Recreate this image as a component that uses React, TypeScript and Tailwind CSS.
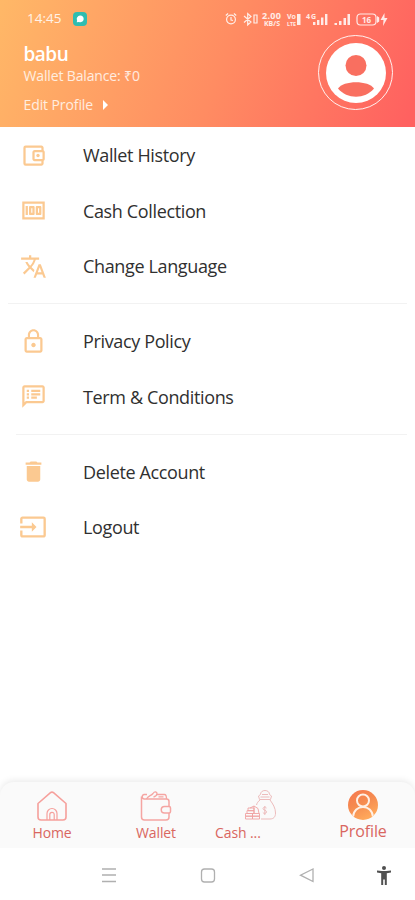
import type { ReactNode } from 'react';
import {
  MdOutlineAccountBalanceWallet,
  MdOutlineMoney,
  MdTranslate,
  MdLockOutline,
  MdOutlineSpeakerNotes,
  MdDelete,
  MdInput,
  MdArrowRight,
} from 'react-icons/md';

const groups = [
  [
    { label: 'Wallet History', icon: <MdOutlineAccountBalanceWallet size={27} /> },
    { label: 'Cash Collection', icon: <MdOutlineMoney size={27} /> },
    { label: 'Change Language', icon: <MdTranslate size={27} /> },
  ],
  [
    { label: 'Privacy Policy', icon: <MdLockOutline size={27} /> },
    { label: 'Term & Conditions', icon: <MdOutlineSpeakerNotes size={27} /> },
  ],
  [
    { label: 'Delete Account', icon: <MdDelete size={27} /> },
    { label: 'Logout', icon: <MdInput size={28} /> },
  ],
];

function StatusBar() {
  return (
    <div className="flex h-[38px] items-center pl-[27px] pr-[25px] text-white/85">
      <span className="w-[37px] text-[13.5px] leading-none">14:45</span>
      <span className="ml-[9px] flex size-[14px] items-center justify-center rounded-[4px] bg-[#2fbdb0]">
        <svg width="10" height="10" viewBox="0 0 10 10" fill="white">
          <path d="M5 1.600a3.300 3.300 0 1 1-1 6.300L1.800 8.300l.3-2A3.300 3.300 0 0 1 5 1.600z" />
        </svg>
      </span>
      <svg className="ml-auto" width="166" height="18" viewBox="0 0 166 18" fill="none" stroke="currentColor" strokeWidth="1.2">
        {/* alarm */}
        <circle cx="7" cy="9.5" r="4.4" />
        <path d="M7 7v3l2 .5M1.800 5.500l2.300-2M12.200 5.500l-2.300-2" />
        {/* bluetooth */}
        <path d="M20 6l7 6-3.300 3V3.500L27 6.500l-7 6M30 5h3v8h-3z" />
        {/* signal bars */}
        <g fill="currentColor" stroke="none">
          <path d="M89 12h2.400v3H89zM93 10h2.400v5H93zM97 7.500h2.400V15H97zM101 4h2.400v11H101z" />
          <path d="M110.500 13h2.500v2h-2.500zM115 11h2.500v4H115zM119.500 8h2.500v7h-2.500zM123.500 4h2.500v11h-2.500z" />
          <path d="M153 6v7l2.200-1.500v-4zM160.500 3l-4 7h3l-.5 6 4.500-8h-3z" />
        </g>
        <rect x="133" y="4" width="19" height="11" rx="3.500" />
        <g fill="currentColor" stroke="none" fontFamily="Open Sans, sans-serif" fontWeight="700">
          <text x="38" y="9" fontSize="9" textLength="19">2.00</text>
          <text x="40" y="16" fontSize="7" textLength="16" lengthAdjust="spacingAndGlyphs">KB/S</text>
          <text x="63" y="9" fontSize="6.500" textLength="9" lengthAdjust="spacingAndGlyphs">Vo</text>
          <text x="63" y="15.500" fontSize="6" textLength="9" lengthAdjust="spacingAndGlyphs">LTE</text>
          <text x="82" y="9" fontSize="7" textLength="10">4G</text>
          <text x="138" y="12.500" fontSize="8" textLength="9">16</text>
        </g>
        <path d="M73 4h3.500v11H73z" fill="currentColor" stroke="none" />
      </svg>
    </div>
  );
}

function Header() {
  return (
    <header className="relative h-[127px] bg-[linear-gradient(110deg,#ffb867_0%,#ff8c62_53%,#ff6160_98%)] text-white">
      <StatusBar />
      <div className="pl-[23.5px]">
        <h1 className="mt-[4px] text-[19px] leading-[24px] font-semibold tracking-[-0.5px]">babu</h1>
        <p className="text-[14px] leading-[20px] tracking-[-0.14px] text-white/80">Wallet Balance: ₹0</p>
        <p className="mt-[7px] flex items-center text-[14px] leading-[20px] tracking-[-0.1px] text-white/80">
          Edit Profile
          <MdArrowRight className="text-white" size={24} />
        </p>
      </div>
      <div className="absolute top-[35px] right-[22px] flex size-[75px] items-center justify-center rounded-full border border-white/90">
        <svg width="60" height="60" viewBox="0 0 60 60">
          <circle cx="30" cy="30" r="30" fill="white" />
          <circle cx="30" cy="22.500" r="10.500" fill="#f96f60" />
          <path d="M12 45.500C17 37 43 37 48 45.500C39 56.500 21 56.500 12 45.500z" fill="#f96f60" />
        </svg>
      </div>
    </header>
  );
}

function HomeIcon() {
  return (
    <svg width="32" height="32" viewBox="0 0 32 32" fill="none" stroke="#f6a09c" strokeWidth="1.6" strokeLinejoin="round">
      <path d="M2 13.500L14.500 2.700a2.300 2.300 0 0 1 3 0L30 13.500V27a3 3 0 0 1-3 3H5a3 3 0 0 1-3-3z" />
      <path d="M11 30v-6.500a5 5 0 0 1 10 0V30M13.800 30v-5.500a2.200 2.200 0 0 1 4.400 0V30" strokeWidth="1.200" />
    </svg>
  );
}

function WalletIcon() {
  return (
    <svg width="32" height="32" viewBox="0 0 32 32" fill="none" stroke="#f5a5a2" strokeWidth="1.5" strokeLinejoin="round">
      <path d="M29 17v-5.500a2.500 2.500 0 0 0-2.500-2.500H4a2.300 2.300 0 0 1 0-4.500h3M1.500 6.500V27a3 3 0 0 0 3 3H26a3 3 0 0 0 3-3v-4" />
      <path d="M24.500 16.500H29a1.500 1.500 0 0 1 1.500 1.500v3.500A1.500 1.500 0 0 1 29 23h-4.500a3.250 3.250 0 0 1 0-6.500z" />
      <path d="M6.500 9c1.500-3.500 4.500-3 6.500-5.500 1.700-2.500 4-1.500 4 0s-1.500 3-3.500 3.500M17 4.500h7.500c1.500 0 2 2 2 4.500M18.500 6.800h5" strokeWidth="1.300" />
    </svg>
  );
}

function CashIcon() {
  return (
    <svg width="32" height="32" viewBox="0 0 32 32" fill="none" stroke="#edbcbc" strokeWidth="1">
      <path d="M16 11c-2 1.500-3 3-3.500 5M26 11c3 4 5.500 8 5.500 13 0 4-2 6-5.500 6h-9" />
      <path d="M15.500 10.500l-1-3.500 2-1.500c0-2.500 2-4 4.500-4s4.500 1.500 4.500 4l2 1.500-1 3.500zM16.500 8h9M18 5.500h6" />
      <path d="M22.500 19c-1-1.500-3.500-1-3.500.700s3.500 1.300 3.500 3.200-3 2-3.700.5M20.800 17v9" />
      <g stroke="#efa3a3" strokeWidth=".9">
        <path d="M4 19h6v2.700H4zM3 21.700h7v2.800H3zM1.500 24.500h7v2.700h-7zM1.500 27.200h7V30h-7zM8.500 24.500h7v2.700h-7zM8.500 27.200h7V30h-7zM10 17l4 2.500 1 5M10 17l-4 2M10 17v7" />
      </g>
    </svg>
  );
}

function ProfileIcon() {
  return (
    <svg width="30" height="30" viewBox="0 0 30 30">
      <defs>
        <linearGradient id="profile" x1="0" y1="0" x2=".5" y2="1">
          <stop offset="0" stopColor="#f7774f" />
          <stop offset=".5" stopColor="#f58a50" />
          <stop offset="1" stopColor="#ffa85b" />
        </linearGradient>
        <clipPath id="disc"><circle cx="15" cy="15" r="15" /></clipPath>
      </defs>
      <circle cx="15" cy="15" r="15" fill="url(#profile)" />
      <g fill="none" stroke="#fff0e6" strokeWidth="2" clipPath="url(#disc)">
        <circle cx="15" cy="10.500" r="6" />
        <path d="M5 27c.5-6.500 5-10 10-10s9.500 3.500 10 10" />
      </g>
    </svg>
  );
}

function Tab({ icon, label, className }: { icon: ReactNode; label: string; className: string }) {
  return (
    <div className={`flex flex-col items-center pt-[8px] text-[#d96660] ${className}`}>
      {icon}
      <span className="mt-px">{label}</span>
    </div>
  );
}

export default function App() {
  return (
    <div className="flex h-[900px] w-[415px] flex-col overflow-hidden bg-white font-['Open_Sans',sans-serif]">
      <Header />
      <main className="flex-1">
        {groups.map((items, i) => (
          <section key={i}>
            {i > 0 && (
              <div className={`mt-[9.5px] mb-[9px] h-px bg-[#f2f2f2] ${i === 1 ? 'ml-[8px] mr-[8px]' : 'ml-[16px] mr-[8px]'}`} />
            )}
            {items.map((item) => (
              <div key={item.label} className="flex h-[55.5px] items-center">
                <span className="ml-[19px] flex w-[28px] justify-center pt-px text-[#fbc991]">{item.icon}</span>
                <span className="ml-[36px] pt-[2px] text-[18px] tracking-[-0.36px] text-[#303030]">{item.label}</span>
              </div>
            ))}
          </section>
        ))}
      </main>
      <nav className="flex h-[66px] rounded-t-[14px] bg-[#fafafa] text-[14px] leading-[20px] tracking-[-0.1px] shadow-[0_-2px_6px_rgba(0,0,0,0.08)]">
        <Tab icon={<HomeIcon />} label="Home" className="w-[104px]" />
        <Tab icon={<WalletIcon />} label="Wallet" className="w-[104px]" />
        <div className="w-[103px] pt-[7px] text-[#d96660]">
          <div className="pl-[36px]"><CashIcon /></div>
          <div className="mt-[2px] pl-[7px]">Cash ...</div>
        </div>
        <Tab icon={<ProfileIcon />} label="Profile" className="w-[104px] text-[16px]" />
      </nav>
      <div className="flex h-[52px] items-center bg-white">
        <svg width="415" height="52" viewBox="0 0 415 52" fill="none" stroke="#b0b0b0" strokeWidth="1.3">
          <path d="M102 21h14M102 27h14M102 33.500h14" />
          <rect x="201.500" y="21" width="13" height="13" rx="3" />
          <path d="M313 21v12.500l-12.500-6.300z" />
          <g fill="#505050" stroke="none">
            <circle cx="384" cy="20" r="2" />
            <path d="M377 22.500l5 .5h4l5-.5v2l-4.200.7V37h-2v-5.500h-1.600V37h-2V25.200L377 24.500z" />
          </g>
        </svg>
      </div>
    </div>
  );
}
